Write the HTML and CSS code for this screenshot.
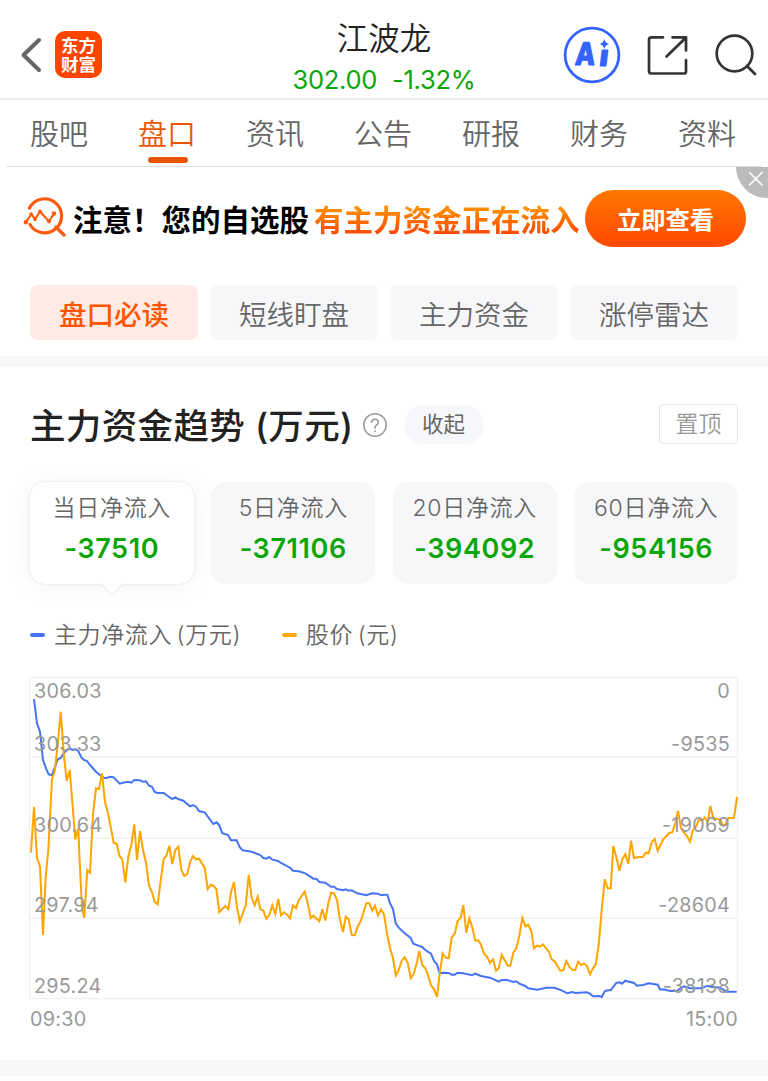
FILE: index.html
```html
<!DOCTYPE html>
<html lang="zh-CN">
<head>
<meta charset="utf-8">
<title>江波龙 302.00 -1.32%</title>
<link rel="stylesheet" href="styles.css">
</head>
<body>
<header class="topbar">
  <div class="topbar-left">
    <svg class="back" width="24" height="40" viewBox="0 0 24 40"><path d="M21 5 L5.500 20 L21 35" /></svg>
    <div class="logo"><span>东方</span><span>财富</span></div>
  </div>
  <div class="quote">
    <h1 class="quote-name">江波龙</h1>
    <div class="quote-price"><span>302.00</span><span>-1.32%</span></div>
  </div>
  <div class="topbar-right">
    <svg class="ai" width="58" height="58" viewBox="0 0 58 58">
      <circle cx="29" cy="29" r="26.9" />
      <g transform="translate(11.500 38.500) skewX(-5)"><text class="ai-a" textLength="20" lengthAdjust="spacingAndGlyphs">A</text></g>
      <g transform="translate(35.500 40) skewX(-7)"><text class="ai-i" textLength="9" lengthAdjust="spacingAndGlyphs">ı</text></g>
      <path d="M41.300 13Q42.300 16.800 46 18Q42.300 19.200 41.300 23Q40.300 19.200 36.600 18Q40.300 16.800 41.300 13Z" />
    </svg>
    <svg class="share" width="44" height="44" viewBox="0 0 44 44">
      <path d="M18 4.300H6.500Q4 4.300 4 6.800V38Q4 40.500 6.500 40.500H39Q41 40.500 41 38.500V27M27.500 4.300H41V17.500M40.500 5L21.500 23.500" />
    </svg>
    <svg class="search" width="44" height="44" viewBox="0 0 44 44">
      <circle cx="20.500" cy="20.500" r="17.800" /><path d="M33 33L41 41" />
    </svg>
  </div>
</header>

<nav class="tabs">
  <a class="tab">股吧</a>
  <a class="tab tab-on">盘口</a>
  <a class="tab">资讯</a>
  <a class="tab">公告</a>
  <a class="tab">研报</a>
  <a class="tab">财务</a>
  <a class="tab">资料</a>
</nav>

<section class="banner">
  <svg class="banner-icon" width="46" height="44" viewBox="0 0 46 44">
    <path d="M6.500 12A17 17 0 1 1 7 28.500M33 31L41 39" />
    <path class="thin" d="M3 26L8.500 18L12 23.500L17 15.500L26 25.500L31 17.500" />
    <circle cx="2.800" cy="26.300" r="2.200" /><circle cx="8" cy="18" r="1.700" /><circle cx="12" cy="23.500" r="1.700" />
    <circle cx="17" cy="15.500" r="1.900" /><circle cx="26" cy="25.500" r="1.900" /><circle cx="31" cy="17.500" r="2.200" />
  </svg>
  <p class="banner-text"><span class="banner-lead">注意！您的自选股</span><span class="banner-hot">有主力资金正在流入</span></p>
  <button class="banner-go">立即查看</button>
  <div class="banner-close"><svg width="32" height="32" viewBox="0 0 32 32"><path d="M13.500 5.500L26 18M26 5.500L13.500 18" /></svg></div>
</section>

<div class="chips">
  <a class="chip chip-on">盘口必读</a>
  <a class="chip">短线盯盘</a>
  <a class="chip">主力资金</a>
  <a class="chip">涨停雷达</a>
</div>

<section class="panel">
  <div class="panel-head">
    <h2 class="panel-title">主力资金趋势 (万元)</h2>
    <svg class="help" width="26" height="26" viewBox="0 0 26 26">
      <circle cx="13" cy="13" r="11.200" />
      <path d="M9.600 10.600Q9.600 7.200 13 7.200Q16.400 7.200 16.400 10.200Q16.400 11.900 14.600 13Q13 14 13 16.200" />
      <circle class="dot" cx="13" cy="19.200" r="1" />
    </svg>
    <span class="fold">收起</span>
    <span class="pin">置顶</span>
  </div>

  <div class="cards">
    <div class="card card-on"><span class="card-label">当日净流入</span><b class="card-value">-37510</b></div>
    <div class="card"><span class="card-label">5日净流入</span><b class="card-value">-371106</b></div>
    <div class="card"><span class="card-label">20日净流入</span><b class="card-value">-394092</b></div>
    <div class="card"><span class="card-label">60日净流入</span><b class="card-value">-954156</b></div>
  </div>

  <div class="legend">
    <span class="key key-flow">主力净流入 (万元)</span>
    <span class="key key-price">股价 (元)</span>
  </div>

  <svg class="chart" width="768" height="370" viewBox="0 670 768 370">
    <path class="grid" d="M29.500 677.500H737.500V998.500H29.500ZM30 757H737M30 838H737M30 918H737" />
    <polyline class="line flow" points="34,699 37,723.3 40,731.7 43,760 46,768.3 48.700,774.3 52,775 54.700,767.7 57.700,759.3 60.700,758 63.700,753.3 66.700,750.3 69.700,748.3 72.300,750 75.300,749 78.300,751 81.300,757.3 84,760 87,761 90,765 96,771.7 102,776.7 105,778.3 110.700,776.7 113.700,777.3 119.700,783.7 122.700,782.7 128.300,781.7 131.300,782.7 134.300,780 140,780.3 143,781.7 146,781.3 149,785.7 152,786.7 154.700,792 157.700,793 163.700,793 166.700,795.3 172.300,799 175.300,797.3 178.300,799 183.300,800.7 190,806.3 193,805 196,806.7 199,811 204.700,812.3 213.300,824 216.700,822.3 219.300,825.3 222.300,833.3 228,835 231,840.3 236.700,840.3 239.700,847.3 242.700,850.3 251.700,851.7 260.300,855 263.300,858 266.300,858.7 269.300,857 272.300,859.7 278,861 281,863 290,867.7 293,870.7 298.700,871.3 305.300,873.3 313.300,878.7 316.300,878.7 319.300,882 325.300,882.7 331,886.7 334,886.7 337,889 343,890.3 345.700,889.3 348.700,890.7 351.700,890.3 357.300,893.3 366.300,895.3 372.300,893.3 378,893.7 381,895.3 384,894.7 387.300,894.7 390,903.3 393,909 395.700,923.3 398.700,927.7 404.700,933.3 410.700,938 413.300,943.7 422.300,947 425.300,950 431,953.7 434,961 437,964.3 439.700,973.3 442.700,972.7 448.700,973 451.700,974.7 454.700,974.7 457.700,972.7 463.300,973.3 472,975.3 475.300,973.7 481,976 490,977.7 498.700,981.7 501.700,980 507.300,980 513.300,982 516.300,981.3 519.300,983.7 525.300,986 528.300,988.3 537.300,989.7 546.300,987.7 554.300,987.7 561.700,990.3 567.300,993.3 572.300,992 575.300,993 587,992.3 590,993.7 593,996.3 599,996 601.700,997 604.700,991.3 607.700,990.3 610.700,990.3 616.300,983 619.700,982.3 622,983.7 625.300,980.7 634,983 637,985.7 643,985 648.700,983.3 657.700,984.7 660.300,989.7 663.300,989.3 670,991 677.300,990.7 681.300,987.7 684,986.3 690,988.3 701.700,988.3 707.300,985.7 710.700,986.7 720,987.7 726.700,991.7 736.700,991.7" />
    <polyline class="line price" points="31,852.5 34,806.7 37,858 40,866.7 43,935 45.700,876.7 48.300,850 52,779 54.700,771 57.700,745 60.700,711.7 63.700,753.3 66.700,781 69.700,770 72.300,801.7 75.300,839.3 78.300,828.3 79.500,858 82,908.3 84.300,917.7 87.300,870 90,872.7 93,814 96,788.3 99,789 102,773.3 105,802.3 108,812.7 113.700,843 116.700,843.7 119.500,856 122.300,859.3 125.300,882.3 128.300,856.7 131.300,845 134.300,824.3 137,860 140,831 143,850 146,862.7 149,885.7 152,892.3 154.700,902 157.700,904.3 160.700,880 163.700,859 166.300,856 169.300,845.7 172.300,864 175.300,850 178.300,846.7 181.300,870 184.300,876 187.300,874 190,862 193,856 196,859.3 199,858.7 204.700,867.7 207.700,889 210.700,884.7 213.300,885.7 216.300,889 219.300,912 225.300,906 228.300,909.3 231,892.3 234,882 237,907.7 239.800,921.3 245.700,905.5 248.700,875 251.700,897.7 254.700,905.3 257.700,896.7 260.300,909 263.300,910.7 266.300,918.7 269.300,915 272.300,905.3 275.300,914 278.300,899 281,915.3 284,912.3 287,914.7 290,918.3 293,905.3 296,908.3 298.700,900.3 304.700,891.7 307.700,903.3 310.700,918 313.300,915.7 319.300,921.3 322.300,909.3 325.300,920.7 328.300,903.3 331,892.7 334,893.3 337,900 340,920 343,932 345.700,916.7 348.700,919.3 351.700,935 354.700,935.3 357.700,926.7 360.700,921 363.300,913.3 366.300,903.3 369.300,903.3 372.300,910.7 375,905.7 378,915.3 381,909.3 384,914.3 387,933.3 390,948.3 393,958.3 395.800,975.5 398.700,970 401.700,960.7 404.700,957.3 407.700,962.7 410.700,978 413.700,974 416.700,963.3 419.300,951 422.300,965 425.300,968.3 428.300,976 431,985.3 434,989.3 437,997 439.700,973.3 442.700,953.3 445.700,957.7 448.700,958.3 451.700,937.3 454.700,934 457.700,920.7 460.700,918 463.300,905 466.300,932.7 469.300,918.3 472.300,927.3 475.300,940.7 478.300,940.3 481,944.7 484,953.7 487,956.7 490,962.7 493,959.3 496,970.7 498.700,968.3 501.700,954.7 507.700,965.7 510.300,965.7 513.300,952.7 516.300,948.3 519.300,936 522.300,918 525.300,926.3 528.300,924.7 531.300,931 534,948.3 537,945.7 540,946.7 543,944.3 549,952 551.700,959.3 554.700,961.3 560.300,970.7 563.300,970.3 566.300,961 569.300,966.7 572.300,969.7 575.300,970 578.200,961.7 581,965 584,963.7 587,966 590,974.3 593,968.3 595.700,964.7 598.700,945 601.700,910 604.700,879.3 607.700,888.3 610.700,888.7 613.300,846 616.300,856.7 619.300,870.7 622.300,859.3 625.300,854 628.300,864 631,840.7 634,858 640,856.7 643,857 645.700,852.7 648.700,853.3 651.700,842 654.700,839 657.700,850.7 663.300,839.3 669.300,833 672.300,832.3 675.300,823.3 678,810.7 681,828.3 684,832.7 687,836 690,841.7 693,830 696,826.7 699,819.7 702,820.7 704.700,817.7 707.700,822 710.300,806 713.300,818.3 720,819.3 722.300,824.7 725.300,824.7 728.300,818 734,818 737,797" />
    <g class="axis">
      <text x="34" y="697.500">306.03</text><text x="34" y="751">303.33</text><text x="34" y="831.500">300.64</text><text x="34" y="912">297.94</text><text x="34" y="992.500">295.24</text>
      <text x="30" y="1026">09:30</text>
    </g>
    <g class="axis axis-end">
      <text x="730" y="697.500">0</text><text x="730" y="751">-9535</text><text x="730" y="831.500">-19069</text><text x="730" y="912">-28604</text><text x="730" y="992.500">-38138</text>
      <text x="738" y="1026">15:00</text>
    </g>
  </svg>
</section>
<div class="divider"></div>
</body>
</html>
```
FILE: styles.css
```css
* { box-sizing: border-box; }
body {
  margin: 0;
  width: 768px;
  height: 1081px;
  overflow: hidden;
  background: #fff;
  color: #666;
  font-family: Inter, "Noto Sans CJK SC", sans-serif;
}
h1, h2, p { margin: 0; font-weight: 400; }
svg { display: block; flex: none; fill: none; stroke-linecap: round; stroke-linejoin: round; }

.topbar {
  display: grid;
  grid-template-columns: 1fr 200px 1fr;
  height: 100px;
  border-bottom: 2px solid #eee;
}
.topbar-left { display: flex; align-items: center; padding: 9px 0 0 18px; gap: 13px; }
.back { stroke: #666; stroke-width: 4; }
.logo {
  display: flex;
  flex-direction: column;
  justify-content: center;
  align-items: center;
  width: 47px;
  height: 47px;
  border-radius: 10px;
  background: #ff4400;
  color: #fff;
  font-size: 17.5px;
  font-weight: 700;
  line-height: 19px;
}
.quote { display: flex; flex-direction: column; align-items: center; padding-top: 19px; }
.quote-name { font-size: 31.5px; line-height: 40px; font-weight: 350; color: #222; }
.quote-price {
  display: flex;
  gap: 15px;
  font-size: 25.5px;
  line-height: 41px;
  letter-spacing: -.3px;
  color: #0aa60a;
  white-space: nowrap;
}
.topbar-right { display: flex; align-items: center; justify-content: flex-end; padding: 10px 10px 0 0; }
.ai { margin-right: 24px; }
.share { margin-right: 25px; }
.ai circle { stroke: #3464ff; stroke-width: 2.8; }
.ai text { fill: #3464ff; stroke: #3464ff; stroke-width: 1.2; font-family: Inter, sans-serif; font-weight: 800; }
.ai-a { font-size: 31px; }
.ai-i { font-size: 29px; }
.ai path { fill: #3464ff; }
.share, .search { stroke: #333; stroke-width: 2.7; }

.tabs {
  display: grid;
  grid-template-columns: repeat(7, 108px);
  height: 67px;
  margin: 0 6px;
  border-bottom: 1px solid #dfdfe8;
}
.tab {
  display: flex;
  flex-direction: column;
  align-items: center;
  width: 106px;
  padding-top: 14px;
  font-size: 29px;
  font-weight: 350;
  line-height: 42px;
}
.tab-on { color: #ea5504; }
.tab-on::after { content: ""; width: 40px; height: 6px; margin: 1px 0 0 2px; border-radius: 3px; background: #ea5504; }

.banner {
  position: relative;
  display: flex;
  align-items: center;
  height: 102px;
  padding-left: 23px;
}
.banner-icon { stroke: #ff5a0a; stroke-width: 3.2; }
.banner-icon .thin { stroke-width: 2.2; }
.banner-icon circle { fill: #ff5a0a; stroke: none; }
.banner-text {
  display: flex;
  width: 512px;
  margin-left: 4px;
  padding-top: 3px;
  gap: 5px;
  font-size: 29.5px;
  line-height: 40px;
  font-weight: 700;
  white-space: nowrap;
}
.banner-lead { color: #000; }
.banner-hot {
  background: linear-gradient(#ff9500 15%, #ff4800 85%);
  background-clip: text;
  -webkit-background-clip: text;
  color: transparent;
}
.banner-go {
  width: 161px;
  height: 57px;
  padding: 0;
  border: 0;
  border-radius: 29px;
  background: linear-gradient(#ff7800, #ff4800);
  color: #fff;
  font: 700 24.3px/55px "Noto Sans CJK SC", sans-serif;
}
.banner-close {
  position: absolute;
  top: 0;
  right: 0;
  width: 32px;
  height: 31px;
  border-bottom-left-radius: 31px;
  background: #bbb;
  stroke: #fff;
  stroke-width: 1.6;
}

.chips {
  display: grid;
  grid-template-columns: repeat(4, 168px);
  gap: 12px;
  height: 98px;
  padding: 16px 30px;
  border-bottom: 11px solid #f7f7fa;
}
.chip {
  height: 55px;
  border-radius: 8px;
  background: #f7f7fa;
  font-size: 27.5px;
  font-weight: 350;
  line-height: 60px;
  text-align: center;
}
.chip-on { background: #ffebe4; color: #ff5500; font-weight: 500; }

.panel { height: 693px; }
.panel-head { display: flex; align-items: center; height: 115px; padding: 0 30px; }
.panel-title { margin-top: -2px; font-size: 35.5px; font-weight: 500; letter-spacing: .35px; color: #222; white-space: nowrap; }
.help { margin-left: 8px; stroke: #999; stroke-width: 1.5; }
.help .dot { fill: #999; stroke: none; }
.fold {
  width: 80px;
  height: 39px;
  margin-left: 16px;
  border-radius: 20px;
  background: #f6f7fa;
  font-size: 21.5px;
  line-height: 39px;
  text-align: center;
}
.pin {
  width: 79px;
  height: 40px;
  margin: -1px 0 0 auto;
  border: 1.5px solid #e8e8e8;
  border-radius: 4px;
  font-size: 23px;
  font-weight: 350;
  line-height: 38px;
  color: #999;
  text-align: center;
}

.cards { display: grid; grid-template-columns: repeat(4, 163.6px); justify-content: space-between; padding: 0 30px; height: 102px; }
.card {
  display: flex;
  flex-direction: column;
  align-items: center;
  border-radius: 15px;
  background: #f7f7fa;
  padding-top: 10px;
}
.card-on {
  position: relative;
  background: #fff;
  box-shadow: 0 0 2px rgba(0, 0, 0, .13), 0 2px 28px rgba(0, 0, 0, .055);
}
.card-on::after {
  content: "";
  position: absolute;
  left: 74px;
  top: 92.500px;
  width: 16px;
  height: 16px;
  background: #fff;
  box-shadow: 1px 1px 1px rgba(0, 0, 0, .06);
  transform: rotate(45deg);
}
.card-label { font-size: 23px; font-weight: 350; line-height: 33px; letter-spacing: .7px; white-space: nowrap; }
.card-value { font-size: 27px; line-height: 48px; font-weight: 600; letter-spacing: .6px; color: #0aa60a; }

.legend { display: flex; gap: 41px; height: 86px; padding: 33px 30px 0; }
.key { display: flex; align-items: center; height: 36px; gap: 9px; font-size: 23px; font-weight: 350; letter-spacing: .6px; word-spacing: -2.5px; line-height: 34px; padding-bottom: 1px; white-space: nowrap; }
.key::before { content: ""; width: 15px; height: 4px; border-radius: 2px; background: #4474f8; }
.key-price::before { background: #ffa800; }

.grid { stroke: #f1f1f2; stroke-width: 1.4; }
.line { stroke-width: 2; stroke-linejoin: miter; stroke-linecap: butt; }
.flow { stroke: #4575f6; }
.price { stroke: #ffa500; }
.axis { fill: #999; font-size: 19.800px; letter-spacing: .25px; }
.axis-end { text-anchor: end; }

.divider { height: 16px; background: #f7f7fa; }
```
